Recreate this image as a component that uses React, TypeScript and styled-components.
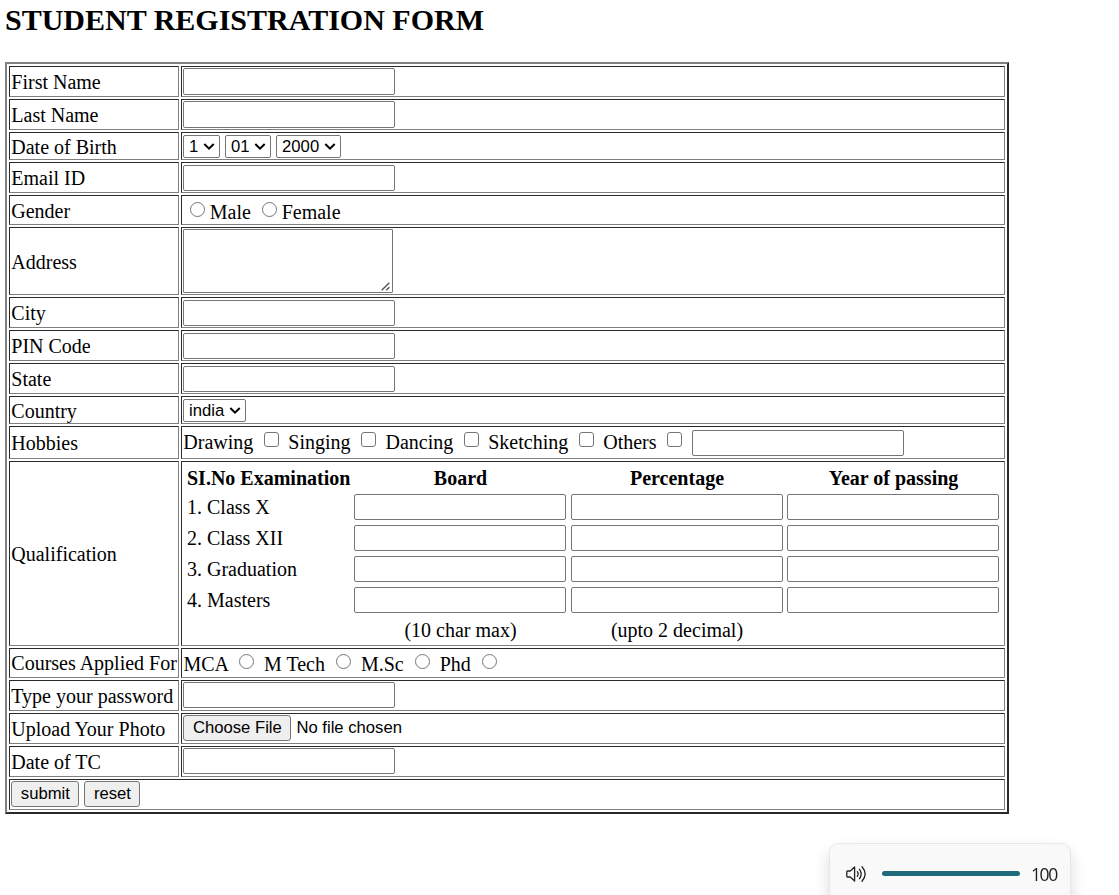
import React from 'react';
import styled, { createGlobalStyle } from 'styled-components';

const light = '#808080';
const dark = '#2a2a2a';
const line = '#767676';

const GlobalStyle = createGlobalStyle`
  * { box-sizing: border-box; }
  html, body { margin: 0; background: #fff; overflow: hidden; }
  body { color: #000; font: 20px/23px "Liberation Serif", "Times New Roman", serif; }
  input, button, select, textarea { font: 16.667px/19px "Liberation Sans", Arial, sans-serif; color: #000; }
`;

const Page = styled.main`
  height: 895px;
  padding: 3px 0 0 5px;
`;

const Title = styled.h2`
  margin: 0 0 25px;
  font-size: 30px;
  line-height: 34px;
  font-weight: bold;
`;

const FormTable = styled.form`
  width: 1004px;
  display: flex;
  flex-direction: column;
  gap: 2px;
  padding: 2px;
  border: 2px solid;
  border-color: ${light} ${dark} ${dark} ${light};
`;

const Row = styled.div<{ $h: number }>`
  display: grid;
  grid-template-columns: 170px 1fr;
  gap: 2px;
  height: ${p => p.$h}px;
`;

const Cell = styled.div<{ $top?: number; $wide?: boolean }>`
  border: 1px solid;
  border-color: ${dark} ${light} ${light} ${dark};
  padding: ${p => p.$top ?? 1}px 1px 0;
  display: flex;
  align-items: flex-start;
  white-space: pre;
  grid-column: ${p => (p.$wide ? '1 / -1' : 'auto')};
`;

const LabelCell = styled(Cell)<{ $shift?: number }>`
  align-items: center;
  padding: ${p => p.$shift ?? 2}px 0 0 1.3px;
`;

const TextInput = styled.input<{ $h?: number }>`
  display: block;
  width: 212px;
  height: ${p => p.$h ?? 26}px;
  margin: 0;
  padding: 1px 3px;
  border: 1px solid ${line};
  border-radius: 2px;
  background: #fff;
  outline: none;
`;

const AreaBox = styled.div`
  position: relative;
  width: 210px;
  height: 64px;
`;

const TextArea = styled.textarea`
  display: block;
  width: 100%;
  height: 100%;
  margin: 0;
  resize: none;
  border: 1px solid ${line};
  border-radius: 1px;
`;

const Grip = styled.svg`
  position: absolute;
  right: 3px;
  bottom: 2px;
`;

const SelectBox = styled.div<{ $w: number }>`
  position: relative;
  width: ${p => p.$w}px;
  height: 23px;
  margin-right: 5px;
`;

const Select = styled.select`
  appearance: none;
  display: block;
  width: 100%;
  height: 100%;
  margin: 0;
  padding: 0 0 0 5.1px;
  border: 1px solid ${line};
  border-radius: 2px;
  background: #fff;
  line-height: 20px;
`;

const Chevron = styled.svg`
  position: absolute;
  right: 5px;
  top: 7px;
  pointer-events: none;
`;

const Mark = styled.input`
  appearance: none;
  display: inline-block;
  flex: none;
  width: 15px;
  height: 15px;
  border: 1px solid ${line};
  border-radius: ${p => (p.type === 'radio' ? '50%' : '3px')};
  background: #fff;
`;

const Inline = styled.div<{ $text: number; $mark: number; $before?: number; $after?: number; $left?: number }>`
  display: flex;
  align-items: flex-start;
  padding-left: ${p => p.$left ?? 0.3}px;
  > span { padding-top: ${p => p.$text}px; }
  > ${Mark} {
    margin: ${p => p.$mark}px ${p => p.$after ?? 4.7}px 0 ${p => p.$before ?? 5.3}px;
  }
`;

const Button = styled.button<{ $w: number }>`
  width: ${p => p.$w}px;
  height: 26px;
  margin: 0 5px 0 0;
  padding: 0 0 1px 0.8px;
  border: 1px solid ${line};
  border-radius: 3px;
  background: #efefef;
  text-align: center;
`;

const FileNote = styled.span`
  font: 16.667px/19px "Liberation Sans", Arial, sans-serif;
  padding: 3px 0 0 0.4px;
`;

const Exams = styled.div`
  display: grid;
  grid-template-columns: 167px 217px 216px 212px;
  grid-template-rows: 26px repeat(4, 31px) 27px;
  padding: 4px 0 0 4px;
`;

const Head = styled.strong<{ $w?: number }>`
  width: ${p => p.$w ?? 212}px;
  text-align: center;
  line-height: 23px;
`;

const Exam = styled.span`
  padding: 3px 0 0;
`;

const Note = styled.span<{ $w?: number }>`
  width: ${p => p.$w ?? 213}px;
  text-align: center;
  padding-top: 2px;
`;

const FieldSlot = styled.div<{ $top?: number }>`
  padding-top: ${p => p.$top ?? 1}px;
`;

const Volume = styled.aside`
  position: fixed;
  left: 829px;
  top: 843px;
  width: 242px;
  height: 64px;
  padding: 19px 0 0 16px;
  display: flex;
  align-items: flex-start;
  border: 1px solid #e8e8e8;
  border-radius: 9px;
  background: #f9f9f9;
  box-shadow: 0 8px 16px rgba(0, 0, 0, 0.14);
`;

const Level = styled.div`
  width: 138px;
  height: 5px;
  margin: 8px 0 0 14px;
  border-radius: 3px;
  background: #1f6b7c;
`;

const Value = styled.span`
  margin: -1px 0 0 11px;
  font: 17.5px/24px "Open Sans", "Noto Sans", sans-serif;
  letter-spacing: -1.4px;
  color: #1c1c1c;
`;

function Dropdown({ w, value }: { w: number; value: string }) {
  return (
    <SelectBox $w={w}>
      <Select defaultValue={value}><option>{value}</option></Select>
      <Chevron width="12" height="9" viewBox="0 0 12 9">
        <path d="M1.3 2 L6 6.7 L10.7 2" fill="none" stroke="#000" strokeWidth="2" />
      </Chevron>
    </SelectBox>
  );
}

function TextRow({ label, h = 26, top = 2 }: { label: string; h?: number; top?: number }) {
  return (
    <Row $h={31}>
      <LabelCell>{label}</LabelCell>
      <Cell $top={top}><TextInput $h={h} aria-label={label} /></Cell>
    </Row>
  );
}

const exams = ['1. Class X', '2. Class XII', '3. Graduation', '4. Masters'];
const hobbies = ['Drawing', 'Singing', 'Dancing', 'Sketching', 'Others'];
const courses = ['MCA', 'M Tech', 'M.Sc', 'Phd'];

export default function App() {
  return (
    <Page>
      <GlobalStyle />
      <Title>STUDENT REGISTRATION FORM</Title>
      <FormTable onSubmit={e => e.preventDefault()}>
        <TextRow label="First Name" h={27} top={1} />
        <TextRow label="Last Name" h={27} top={1} />
        <Row $h={28}>
          <LabelCell>Date of Birth</LabelCell>
          <Cell $top={2}>
            <Dropdown w={37} value="1" />
            <Dropdown w={46} value="01" />
            <Dropdown w={65} value="2000" />
          </Cell>
        </Row>
        <TextRow label="Email ID" />
        <Row $h={30}>
          <LabelCell>Gender</LabelCell>
          <Cell>
            <Inline $text={4} $mark={5} $left={1} $before={6} $after={4.8}>
              <Mark type="radio" name="gender" /><span>{'Male '}</span>
              <Mark type="radio" name="gender" /><span>Female</span>
            </Inline>
          </Cell>
        </Row>
        <Row $h={68}>
          <LabelCell>Address</LabelCell>
          <Cell>
            <AreaBox>
              <TextArea aria-label="Address" />
              <Grip width="9" height="9" viewBox="0 0 9 9">
                <path d="M0.7 8.3 L8.3 0.7 M5.2 8.3 L8.4 5.2" stroke="#555" strokeWidth="1.4" fill="none" />
              </Grip>
            </AreaBox>
          </Cell>
        </Row>
        <TextRow label="City" />
        <TextRow label="PIN Code" />
        <TextRow label="State" />
        <Row $h={28}>
          <LabelCell>Country</LabelCell>
          <Cell $top={2}><Dropdown w={63} value="india" /></Cell>
        </Row>
        <Row $h={33}>
          <LabelCell>Hobbies</LabelCell>
          <Cell>
            <Inline $text={3} $mark={4}>
              {hobbies.map(name => (
                <React.Fragment key={name}>
                  <span>{name + ' '}</span><Mark type="checkbox" aria-label={name} /><span> </span>
                </React.Fragment>
              ))}
            </Inline>
            <FieldSlot $top={2}><TextInput aria-label="Other hobby" /></FieldSlot>
          </Cell>
        </Row>
        <Row $h={185}>
          <LabelCell>Qualification</LabelCell>
          <Cell>
            <Exams>
              <Head $w={161}>SI.No Examination</Head>
              <Head $w={213}>Board</Head>
              <Head>Percentage</Head>
              <Head $w={213}>Year of passing</Head>
              {exams.map(name => (
                <React.Fragment key={name}>
                  <Exam>{name}</Exam>
                  {['Board', 'Percentage', 'Year'].map(col => (
                    <FieldSlot key={col}><TextInput aria-label={`${name} ${col}`} /></FieldSlot>
                  ))}
                </React.Fragment>
              ))}
              <span />
              <Note>(10 char max)</Note>
              <Note $w={212}>(upto 2 decimal)</Note>
            </Exams>
          </Cell>
        </Row>
        <Row $h={30}>
          <LabelCell $shift={0}>Courses Applied For</LabelCell>
          <Cell>
            <Inline $text={3} $mark={4} $left={0.5} $before={6.4} $after={4.6}>
              {courses.map(name => (
                <React.Fragment key={name}>
                  <span>{name + ' '}</span><Mark type="radio" name="course" aria-label={name} /><span> </span>
                </React.Fragment>
              ))}
            </Inline>
          </Cell>
        </Row>
        <TextRow label="Type your password" top={1} />
        <Row $h={31}>
          <LabelCell>Upload Your Photo</LabelCell>
          <Cell>
            <Button type="button" $w={108}>Choose File</Button>
            <FileNote>No file chosen</FileNote>
          </Cell>
        </Row>
        <TextRow label="Date of TC" top={1} />
        <Row $h={31}>
          <Cell $wide>
            <Button type="submit" $w={68}>submit</Button>
            <Button type="reset" $w={56}>reset</Button>
          </Cell>
        </Row>
      </FormTable>
      <Volume>
        <svg width="22" height="22" viewBox="0 0 22 22" fill="none" stroke="#222" strokeWidth="1.3" strokeLinecap="round" strokeLinejoin="round">
          <path d="M1.5 8 H4.3 L8.6 4 V18 L4.3 14 H1.5 Q0.8 14 0.8 13 V9 Q0.8 8 1.5 8 Z" />
          <path d="M11.3 8.7 Q13 11 11.3 13.3 M13.5 6.3 Q16.8 11 13.5 15.7 M16 3.8 Q22.3 11 16 18.2" />
        </svg>
        <Level />
        <Value>100</Value>
      </Volume>
    </Page>
  );
}
